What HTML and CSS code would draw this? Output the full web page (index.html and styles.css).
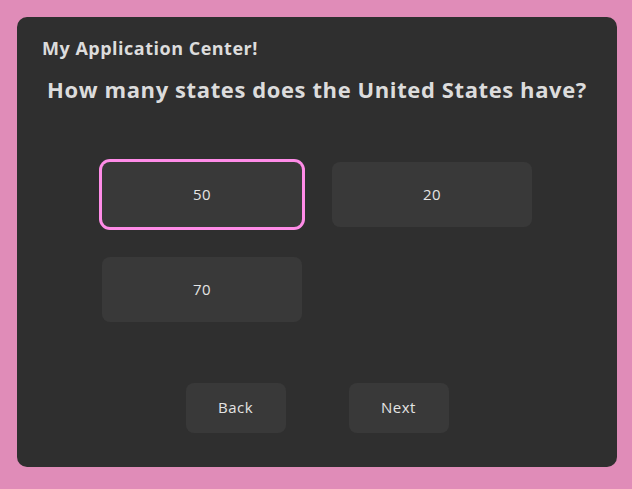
FILE: index.html
```html
<!DOCTYPE html>
<html>
<head>
<meta charset="utf-8">
<link rel="stylesheet" href="styles.css">
</head>
<body>
<div class="card">
  <div class="app-title">My Application Center!</div>
  <div class="question">How many states does the United States have?</div>
  <div class="options">
    <button class="option selected">50</button>
    <button class="option">20</button>
    <button class="option">70</button>
  </div>
  <div class="nav">
    <button class="nav-btn">Back</button>
    <button class="nav-btn">Next</button>
  </div>
</div>
</body>
</html>
```
FILE: styles.css
```css
html, body {
  margin: 0;
  padding: 0;
}
body {
  background: #e08cb8;
  width: 632px;
  height: 489px;
  padding: 17px;
  box-sizing: border-box;
  font-family: "Open Sans", "Lato", sans-serif;
}
.card {
  width: 600px;
  height: 450px;
  background: #2f2f2f;
  border-radius: 10px;
  box-sizing: border-box;
  padding-top: 19px;
  display: flex;
  flex-direction: column;
  color: #dcdcdc;
}
.app-title {
  font-weight: 700;
  font-size: 18px;
  line-height: 24px;
  letter-spacing: 0.5px;
  padding-left: 25px;
}
.question {
  font-weight: 700;
  font-size: 22px;
  line-height: 30px;
  letter-spacing: 0.6px;
  margin-top: 14px;
  text-align: center;
}
.options {
  display: grid;
  grid-template-columns: 200px 200px;
  grid-auto-rows: 65px;
  gap: 30px;
  justify-content: center;
  margin-top: 58px;
}
.option, .nav-btn {
  border: none;
  background: #393939;
  color: #e4e4e4;
  font-family: inherit;
  font-weight: 500;
  font-size: 15px;
  letter-spacing: 0.5px;
  border-radius: 8px;
  padding: 0 0 2px;
}
.option.selected {
  box-shadow: 0 0 0 3px #ff8ce8;
}
.nav {
  display: flex;
  justify-content: center;
  gap: 63px;
  margin-top: 61px;
}
.nav-btn {
  width: 100px;
  height: 50px;
}
```
